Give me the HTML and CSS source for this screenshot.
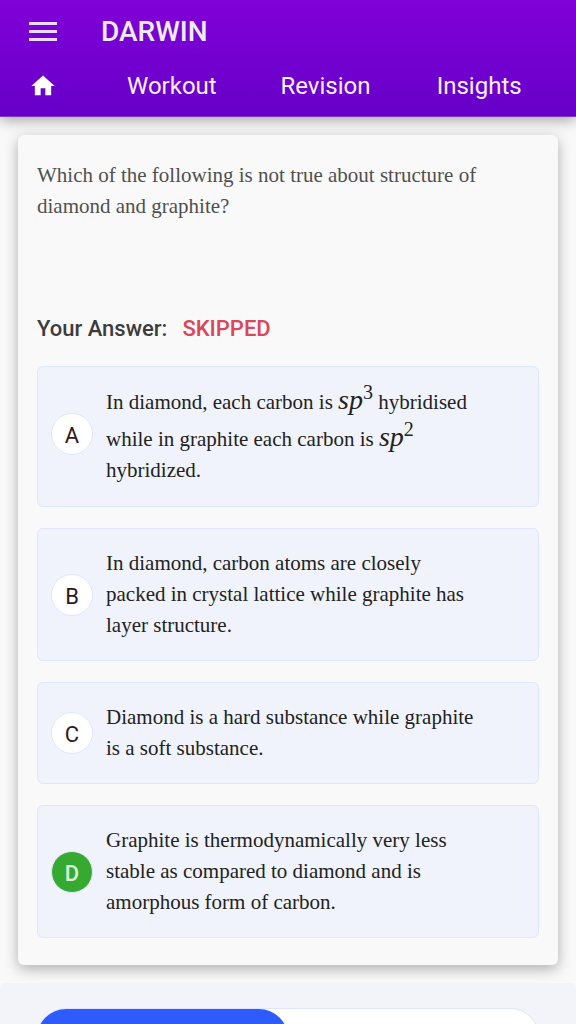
FILE: index.html
```html
<!DOCTYPE html>
<html lang="en">
	<head>
		<meta charset="utf-8">
		<meta name="viewport" content="width=device-width, initial-scale=1">
		<title>Darwin</title>
		<link rel="stylesheet" href="styles.css">
	</head>
	<body>
		<header class="header">
			<div class="title-bar">
				<button class="menu-btn" type="button" aria-label="Menu">
					<svg width="30" height="20" viewBox="0 0 30 20"><path d="M1 2.5h28M1 10.5h28M1 18.5h28" stroke="#eadcf7" stroke-width="3"/></svg>
				</button>
				<h1>DARWIN</h1>
			</div>
			<nav class="nav">
				<a class="home" href="#" aria-label="Home">
					<svg width="28" height="28" viewBox="0 0 24 24"><path d="M10 20v-6h4v6h5v-8h3L12 3 2 12h3v8z" fill="#fff"/></svg>
				</a>
				<a href="#">Workout</a>
				<a href="#">Revision</a>
				<a href="#">Insights</a>
			</nav>
		</header>

		<main class="card">
			<p class="question">Which of the following is not true about structure of diamond and graphite?</p>
			<p class="answer">Your Answer: <span class="skipped">SKIPPED</span></p>

			<ul class="options">
				<li class="has-math">
					<span class="letter">A</span>
					<p>In diamond, each carbon is <span class="math"><i>sp</i><sup>3</sup></span> hybridised while in graphite each carbon is <span class="math"><i>sp</i><sup>2</sup></span> hybridized.</p>
				</li>
				<li>
					<span class="letter">B</span>
					<p>In diamond, carbon atoms are closely packed in crystal lattice while graphite has layer structure.</p>
				</li>
				<li>
					<span class="letter">C</span>
					<p>Diamond is a hard substance while graphite is a soft substance.</p>
				</li>
				<li>
					<span class="letter correct">D</span>
					<p>Graphite is thermodynamically very less stable as compared to diamond and is amorphous form of carbon.</p>
				</li>
			</ul>
		</main>

		<section class="bottom">
			<div class="switch">
				<button class="active" type="button" aria-label="First tab"></button>
				<button type="button" aria-label="Second tab"></button>
			</div>
		</section>
	</body>
</html>
```

FILE: styles.css
```css
* {
	margin: 0;
	padding: 0;
	box-sizing: border-box;
}

html {
	height: 100%;
	overflow: hidden;
}

body {
	height: 100%;
	overflow: auto;
	scrollbar-width: none;
	background: #f9f9f9;
	color: #222;
	font-family: Roboto, sans-serif;
}

button {
	border: 0;
	background: none;
	cursor: pointer;
}

svg {
	display: block;
}

/* header */
.header {
	height: 117px;
	background: linear-gradient(#8100d8, #6600c8);
	border-bottom: 1px solid #8436cf;
	box-shadow: 0 2px 14px rgba(0, 0, 0, 0.4);
}

.title-bar {
	display: flex;
	align-items: center;
	gap: 43px;
	height: 62px;
	padding: 0 28px;
}

h1 {
	color: #ececec;
	font-size: 28px;
	font-weight: 500;
}

.nav {
	display: grid;
	grid-template-columns: 66px 1fr 1fr 1fr;
	align-items: center;
	height: 48px;
	padding: 0 20px 0 29px;
}

.nav a {
	color: #f6f0fc;
	font-size: 24px;
	text-align: center;
	text-decoration: none;
}

.nav .home {
	justify-self: start;
}

/* question card */
.card {
	margin: 18px;
	padding: 25px 19px 27px;
	border-radius: 6px;
	background: #f9f9f9;
	box-shadow: 0 4px 14px rgba(0, 0, 0, 0.3);
}

.question {
	min-height: 153px;
	color: #505050;
	font: 21px/31px "Liberation Serif", serif;
}

.answer {
	display: flex;
	gap: 15px;
	height: 53px;
	color: #3c3c3c;
	font-size: 22px;
	font-weight: 500;
	line-height: 31px;
}

.skipped {
	color: #dc4659;
}

.options {
	display: grid;
	gap: 21px;
	list-style: none;
}

.options li {
	display: flex;
	align-items: center;
	gap: 13px;
	padding: 19px 56px 19px 13px;
	border: 1px solid #dfe6ff;
	border-radius: 6px;
	background: #f0f3fb;
}

.options li.has-math {
	padding-top: 14px;
	padding-bottom: 20px;
}

.options p {
	font: 21px/31px "Liberation Serif", serif;
}

.letter {
	flex: none;
	width: 42px;
	height: 42px;
	border: 1px solid #e1e6ff;
	border-radius: 50%;
	background: #fff;
	color: #301820;
	font-size: 22px;
	line-height: 44px;
	text-align: center;
}

.correct {
	background: #36aa30;
	color: #d9f0d8;
	font-weight: 500;
}

.math {
	display: inline-block;
	padding-top: 6px;
}

.math i {
	font-size: 28px;
	line-height: 0;
}

.math sup {
	font-size: 20px;
	line-height: 0;
	vertical-align: 10px;
}

/* bottom switch */
.bottom {
	height: 120px;
	padding: 25px 36px;
	border-radius: 6px;
	background: #f3f4fa;
}

.switch {
	display: flex;
	height: 60px;
	border: 1px solid #dfe6fb;
	border-radius: 30px;
	background: #fff;
}

.switch button {
	flex: 1;
	border-radius: 30px;
}

.switch .active {
	background: #2e5bff;
}
```
